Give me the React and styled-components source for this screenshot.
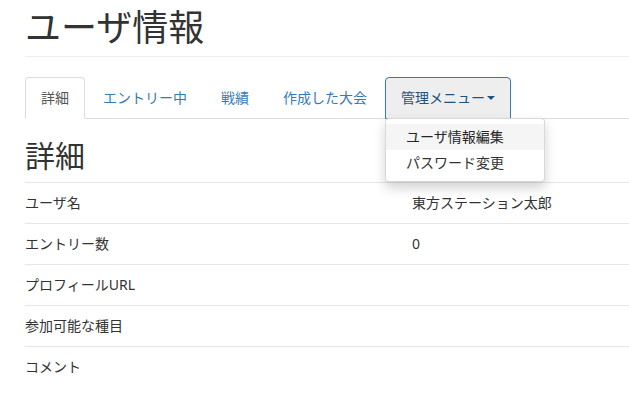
import React from "react";
import styled, { createGlobalStyle } from "styled-components";

const GlobalStyle = createGlobalStyle`
  html, body {
    margin: 0;
    padding: 0;
    background: #fff;
    overflow: hidden;
  }
  body {
    font-family: "Noto Sans", "Noto Sans CJK JP", sans-serif;
    font-size: 14px;
    line-height: 20px;
    color: #333;
  }
`;

const tabs = ["詳細", "エントリー中", "戦績", "作成した大会"];

const rows = [
  { label: "ユーザ名", value: "東方ステーション太郎" },
  { label: "エントリー数", value: "0" },
  { label: "プロフィールURL", value: "" },
  { label: "参加可能な種目", value: "" },
  { label: "コメント", value: "" },
];

const App = () => {
  return (
    <Page>
      <GlobalStyle />
      <PageHeader>
        <h1>ユーザ情報</h1>
      </PageHeader>

      <Tabs>
        {tabs.map((t, i) => (
          <Tab key={t} active={i === 0}>
            <a>{t}</a>
          </Tab>
        ))}
        <Tab open>
          <a>
            管理メニュー<Caret />
          </a>
          <DropdownMenu>
            <li className="hover">
              <a>ユーザ情報編集</a>
            </li>
            <li>
              <a>パスワード変更</a>
            </li>
          </DropdownMenu>
        </Tab>
      </Tabs>

      <SectionTitle>詳細</SectionTitle>
      <InfoList>
        {rows.map((r) => (
          <InfoRow key={r.label}>
            <span className="label">{r.label}</span>
            <span className="value">{r.value}</span>
          </InfoRow>
        ))}
      </InfoList>
    </Page>
  );
};

const Page = styled.div`
  padding-left: 25px;
`;

const PageHeader = styled.div`
  padding: 8px 0 8px;
  border-bottom: 1px solid #eee;

  h1 {
    margin: 0;
    font-size: 36px;
    line-height: 40px;
    font-weight: 400;
    color: #333;
  }
`;

const Tabs = styled.ul`
  display: flex;
  list-style: none;
  margin: 20px 0 0;
  padding: 0;
  border-bottom: 1px solid #ddd;
`;

const Tab = styled.li`
  position: relative;
  margin-right: 2px;
  margin-bottom: -1px;

  > a {
    display: flex;
    align-items: center;
    padding: 10px 15px;
    line-height: 20px;
    border: 1px solid transparent;
    border-radius: 4px 4px 0 0;
    color: #337ab7;
    cursor: pointer;
    ${(p) =>
      p.active &&
      `
      color: #555;
      background: #fff;
      border-color: #ddd #ddd transparent;
    `}
    ${(p) =>
      p.open &&
      `
      color: #23527c;
      background: #eee;
      border-color: #337ab7;
    `}
  }
`;

const Caret = styled.span`
  display: inline-block;
  width: 0;
  height: 0;
  margin-left: 2px;
  border-top: 4px solid;
  border-left: 4px solid transparent;
  border-right: 4px solid transparent;
`;

const DropdownMenu = styled.ul`
  position: absolute;
  top: 100%;
  left: 0;
  z-index: 10;
  min-width: 160px;
  margin: -1px 0 0;
  padding: 5px 0;
  list-style: none;
  background: #fff;
  border: 1px solid rgba(0, 0, 0, 0.15);
  border-radius: 4px;
  box-shadow: 0 6px 12px rgba(0, 0, 0, 0.175);
  box-sizing: border-box;

  li a {
    display: block;
    padding: 3px 20px;
    line-height: 20px;
    color: #333;
    white-space: nowrap;
  }

  li.hover a {
    background: #f5f5f5;
    color: #262626;
  }
`;

const SectionTitle = styled.h2`
  margin: 20px 0 10px;
  font-size: 30px;
  line-height: 33px;
  font-weight: 400;
  color: #333;
`;

const InfoList = styled.div`
  display: flex;
  flex-direction: column;
`;

const InfoRow = styled.div`
  display: grid;
  grid-template-columns: 387px 1fr;
  padding: 10px 0;
  border-top: 1px solid #e6e6e6;
  line-height: 20px;

  .label,
  .value {
    color: #333;
  }
`;

export default App;
